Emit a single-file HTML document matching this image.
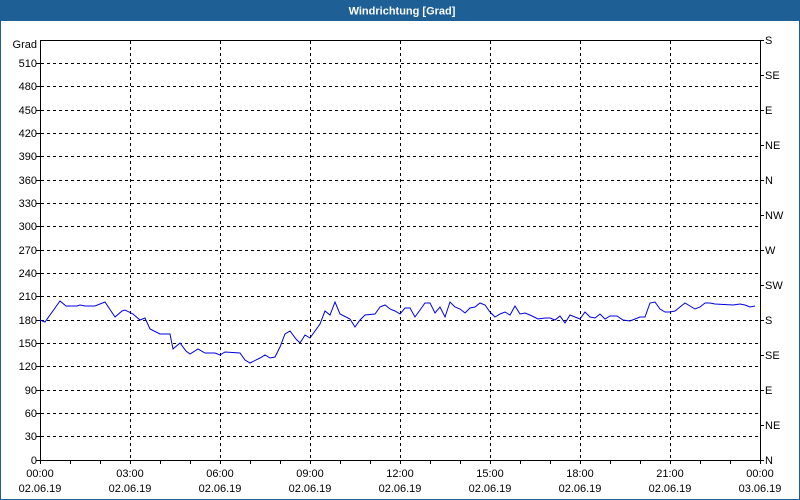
<!DOCTYPE html>
<html><head><meta charset="utf-8"><style>
html,body{margin:0;padding:0;background:#fff}
body{width:800px;height:500px;overflow:hidden}
svg{display:block}
text{font-family:"Liberation Sans",Tahoma,sans-serif;font-size:11px;fill:#000}
</style></head><body>
<svg width="800" height="500" viewBox="0 0 800 500" xmlns="http://www.w3.org/2000/svg">
<rect x="0" y="0" width="800" height="500" fill="#fff"/>
<rect x="0.5" y="0.5" width="799" height="499" fill="none" stroke="#1e5f96" stroke-width="1"/>
<rect x="0" y="0" width="800" height="21" fill="#1e5f96"/>
<text x="402" y="14.5" text-anchor="middle" style="fill:#fff;font-weight:bold;font-size:11px">Windrichtung [Grad]</text>

<g stroke="#000" stroke-width="1" stroke-dasharray="3,3" fill="none">
<path d="M41 63.5H760M41 86.5H760M41 110.5H760M41 133.5H760M41 156.5H760M41 180.5H760M41 203.5H760M41 226.5H760M41 250.5H760M41 273.5H760M41 296.5H760M41 320.5H760M41 343.5H760M41 366.5H760M41 390.5H760M41 413.5H760M41 436.5H760"/>
<path d="M130.5 41V460M220.5 41V460M310.5 41V460M400.5 41V460M490.5 41V460M580.5 41V460M670.5 41V460"/>
</g>
<g stroke="#000" stroke-width="1" fill="none">
<path d="M40.5 40.5H760.5V460.5H40.5Z"/>
<path d="M36 63.5H40M36 86.5H40M36 110.5H40M36 133.5H40M36 156.5H40M36 180.5H40M36 203.5H40M36 226.5H40M36 250.5H40M36 273.5H40M36 296.5H40M36 320.5H40M36 343.5H40M36 366.5H40M36 390.5H40M36 413.5H40M36 436.5H40M36 460.5H40"/>
<path d="M760 40.5H764M760 75.5H764M760 110.5H764M760 145.5H764M760 180.5H764M760 215.5H764M760 250.5H764M760 285.5H764M760 320.5H764M760 355.5H764M760 390.5H764M760 425.5H764M760 460.5H764"/>
<path d="M40.5 460V464M70.5 460V464M100.5 460V464M130.5 460V464M160.5 460V464M190.5 460V464M220.5 460V464M250.5 460V464M280.5 460V464M310.5 460V464M340.5 460V464M370.5 460V464M400.5 460V464M430.5 460V464M460.5 460V464M490.5 460V464M520.5 460V464M550.5 460V464M580.5 460V464M610.5 460V464M640.5 460V464M670.5 460V464M700.5 460V464M730.5 460V464M760.5 460V464"/>
</g>

<polyline fill="none" stroke="#0000e0" stroke-width="1" points="40,320 45,322 60,301 66,306 77,306 80,305 85,306 95,306 105,302 115,317 122,311 125,310 133,314 140,320 145,318 150,329 160,334 170,334 173,349 180,343 186,351 190,354 198,349 205,353 215,353 220,355 225,352 240,353 245,360 250,363 260,358 265,355 270,358 275,357 280,347 285,334 290,331 296,339 300,343 305,335 310,338 320,324 325,311 330,315 335,302 340,314 350,319 355,327 360,320 365,315 375,314 380,307 385,305 390,309 395,311 400,314 405,308 410,308 415,317 420,310 425,303 430,303 435,313 440,307 445,317 450,302 455,307 460,309 465,313 470,308 475,307 480,303 485,305 490,312 495,317 500,314 505,312 510,315 515,306 520,314 525,313 530,315 538,319 545,318 550,318 555,320 560,316 565,323 570,315 575,317 580,319 585,312 590,317 595,318 600,314 605,319 610,316 617,316 623,320 630,321 635,319 640,317 645,317 650,303 655,302 660,309 665,312 670,312 675,311 680,307 685,303 690,306 695,309 700,307 705,303 710,303 715,304 733,305 740,304 745,305 750,307 755,306"/>

<g text-anchor="end">
<text x="37" y="48">Grad</text>
<text x="37" y="67">510</text>
<text x="37" y="90">480</text>
<text x="37" y="114">450</text>
<text x="37" y="137">420</text>
<text x="37" y="160">390</text>
<text x="37" y="184">360</text>
<text x="37" y="207">330</text>
<text x="37" y="230">300</text>
<text x="37" y="254">270</text>
<text x="37" y="277">240</text>
<text x="37" y="300">210</text>
<text x="37" y="324">180</text>
<text x="37" y="347">150</text>
<text x="37" y="370">120</text>
<text x="37" y="394">90</text>
<text x="37" y="417">60</text>
<text x="37" y="440">30</text>
<text x="37" y="464">0</text>
</g>
<g>
<text x="765" y="44">S</text>
<text x="765" y="79">SE</text>
<text x="765" y="114">E</text>
<text x="765" y="149">NE</text>
<text x="765" y="184">N</text>
<text x="765" y="219">NW</text>
<text x="765" y="254">W</text>
<text x="765" y="289">SW</text>
<text x="765" y="324">S</text>
<text x="765" y="359">SE</text>
<text x="765" y="394">E</text>
<text x="765" y="429">NE</text>
<text x="765" y="464">N</text>
</g>
<g text-anchor="middle">
<text x="40" y="477">00:00</text><text x="40" y="492">02.06.19</text>
<text x="130" y="477">03:00</text><text x="130" y="492">02.06.19</text>
<text x="220" y="477">06:00</text><text x="220" y="492">02.06.19</text>
<text x="310" y="477">09:00</text><text x="310" y="492">02.06.19</text>
<text x="400" y="477">12:00</text><text x="400" y="492">02.06.19</text>
<text x="490" y="477">15:00</text><text x="490" y="492">02.06.19</text>
<text x="580" y="477">18:00</text><text x="580" y="492">02.06.19</text>
<text x="670" y="477">21:00</text><text x="670" y="492">02.06.19</text>
<text x="760" y="477">00:00</text><text x="760" y="492">03.06.19</text>
</g>
</svg>
</body></html>
